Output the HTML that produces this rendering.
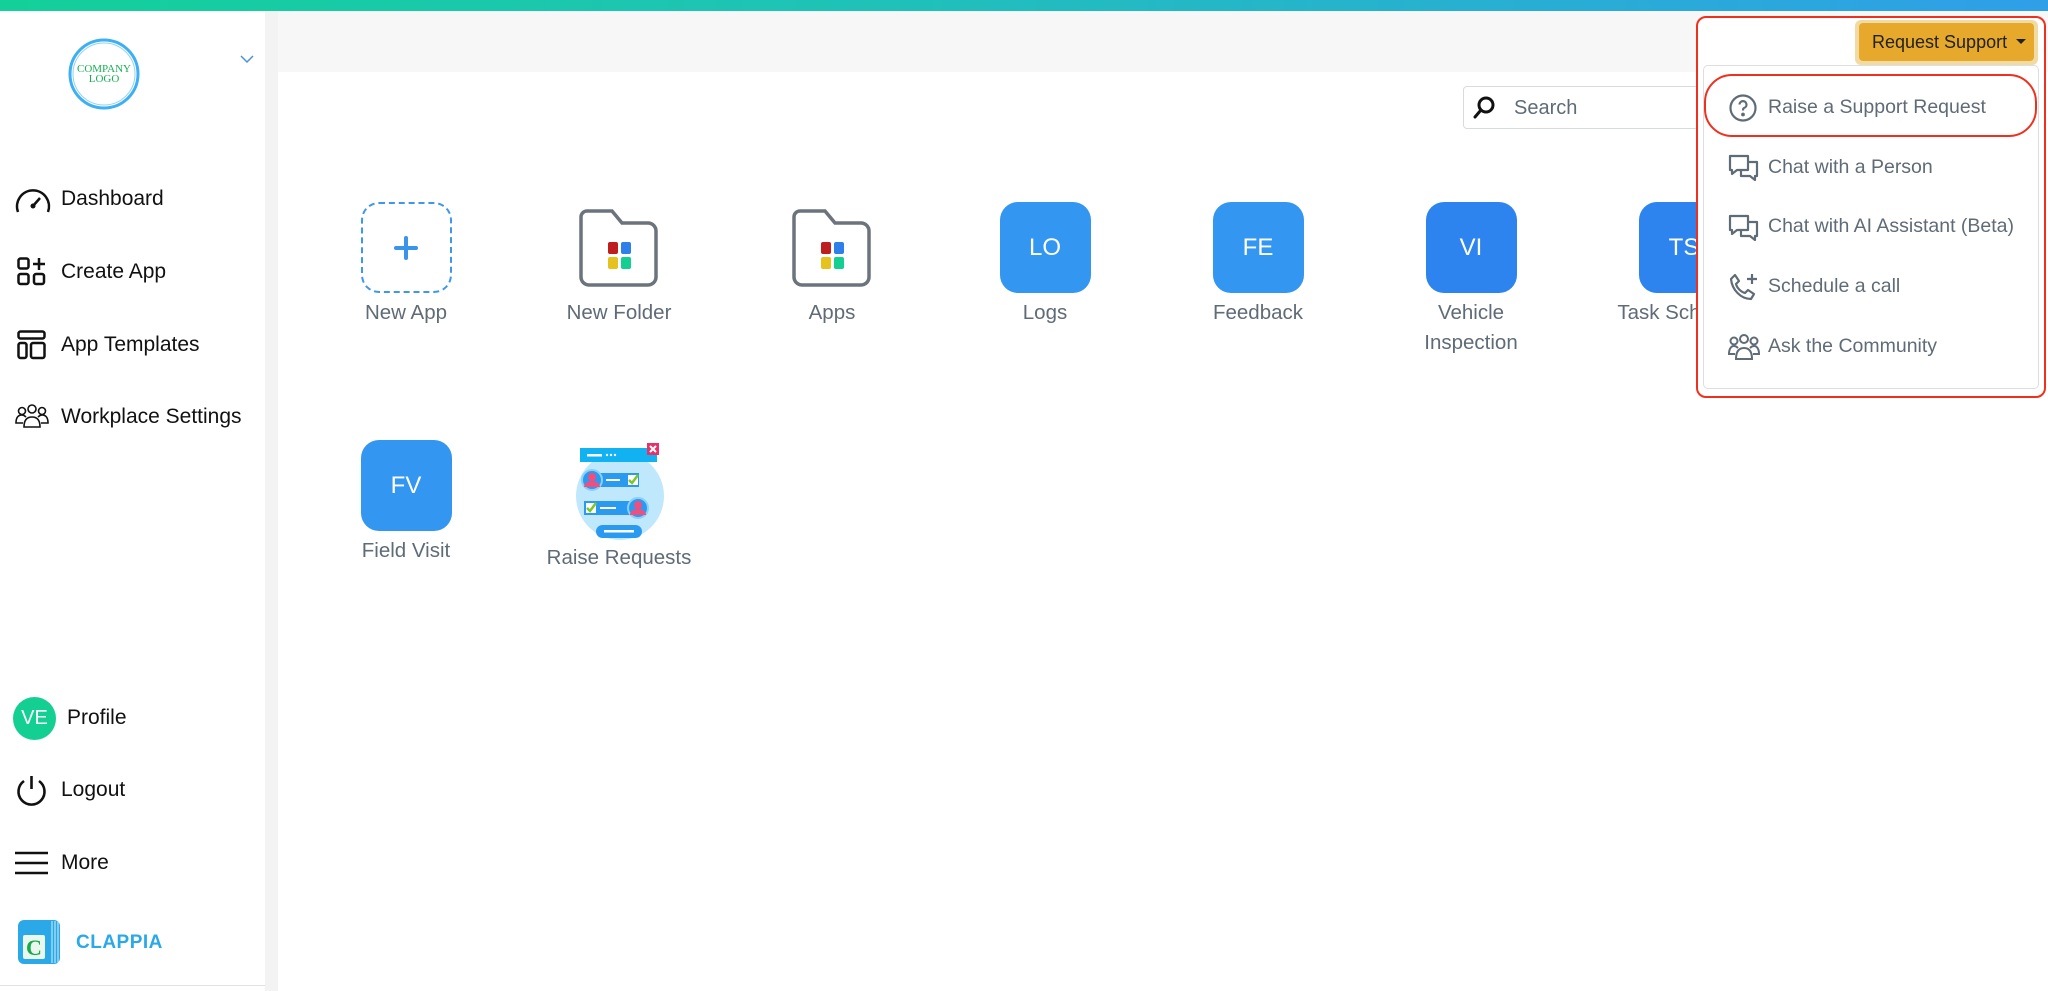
<!DOCTYPE html>
<html><head><meta charset="utf-8"><style>
*{box-sizing:border-box;margin:0;padding:0}
body{width:2048px;height:991px;overflow:hidden;background:#fff;font-family:"Liberation Sans",sans-serif;position:relative}
.abs{position:absolute}
.top{left:0;top:0;width:2048px;height:11px;background:linear-gradient(90deg,#13d09a,#1fc3b6 40%,#2f9fe8)}
.side{left:0;top:11px;width:265px;height:980px;background:#fff}
.strip{left:265px;top:11px;width:13px;height:980px;background:#f3f3f3}
.hdr{left:278px;top:11px;width:1770px;height:61px;background:#f7f7f7}
.nav{position:absolute;left:61px;font-size:21px;color:#111;line-height:24px}
.ico{position:absolute;left:14px}
.app{position:absolute;width:160px;text-align:center;color:#5f6b77;font-size:20.5px;line-height:30px}
.tile{width:91px;height:91px;border-radius:18px;margin:0 auto 5px;color:#fff;font-size:24px;display:flex;align-items:center;justify-content:center}
.mi{position:absolute;left:1768px;font-size:19.5px;color:#5f6b77;line-height:24px}
.mic{position:absolute;left:1728px}
</style></head><body>
<div class="abs top"></div>
<div class="abs side"></div>
<div class="abs strip"></div>
<div class="abs hdr"></div>

<svg class="abs" style="left:66px;top:36px" width="76" height="76" viewBox="0 0 76 76">
<circle cx="38" cy="38" r="34" fill="none" stroke="#3eb0f2" stroke-width="3"/>
<circle cx="38" cy="38" r="31" fill="none" stroke="#8fd2fa" stroke-width="1"/>
<text x="38" y="36" text-anchor="middle" font-family="Liberation Serif" font-size="11" fill="#17b052">COMPANY</text>
<text x="38" y="46" text-anchor="middle" font-family="Liberation Serif" font-size="11" fill="#17b052">LOGO</text>
</svg>
<svg class="abs" style="left:240px;top:55px" width="14" height="9" viewBox="0 0 14 9"><path d="M1 1l6 6 6-6" fill="none" stroke="#4a90e2" stroke-width="1.5"/></svg>

<svg class="ico" style="top:184px" width="38" height="30" viewBox="0 0 38 30"><path d="M4 28A16 16 0 1 1 34 28" fill="none" stroke="#111" stroke-width="2.5"/><path d="M19 22l7-8" stroke="#111" stroke-width="2.5"/><circle cx="19" cy="22" r="2.5" fill="#111"/></svg>
<div class="nav" style="top:187px">Dashboard</div>
<svg class="ico" style="left:17px;top:257px" width="30" height="30" viewBox="0 0 30 30" fill="none" stroke="#111" stroke-width="2.5"><rect x="1.5" y="1.5" width="10" height="10" rx="2"/><rect x="1.5" y="17" width="10" height="10" rx="2"/><rect x="17" y="17" width="10" height="10" rx="2"/><path d="M22 1v12M16 7h12"/></svg>
<div class="nav" style="top:260px">Create App</div>
<svg class="ico" style="left:17px;top:330px" width="30" height="30" viewBox="0 0 30 30" fill="none" stroke="#111" stroke-width="2.5"><rect x="1.5" y="1.5" width="26" height="7" rx="2"/><rect x="1.5" y="13" width="8" height="15" rx="2"/><rect x="14" y="13" width="13.5" height="15" rx="2"/></svg>
<div class="nav" style="top:333px">App Templates</div>
<svg class="ico" style="top:403px" width="36" height="26" viewBox="0 0 36 26" fill="none" stroke="#111" stroke-width="1.6"><circle cx="18" cy="6" r="4"/><circle cx="8" cy="8" r="3.5"/><circle cx="28" cy="8" r="3.5"/><path d="M10 24c0-7 3-10 8-10s8 3 8 10z"/><path d="M9 20H2c0-5 2-8 6-8 2 0 3 1 4 2M27 20h7c0-5-2-8-6-8-2 0-3 1-4 2"/></svg>
<div class="nav" style="top:405px">Workplace Settings</div>

<div class="abs" style="left:13px;top:697px;width:43px;height:43px;border-radius:50%;background:#13cf92;color:#fff;font-size:20px;display:flex;align-items:center;justify-content:center">VE</div>
<div class="nav" style="left:67px;top:706px">Profile</div>
<svg class="ico" style="left:15px;top:774px" width="33" height="33" viewBox="0 0 33 33" fill="none" stroke="#111" stroke-width="2.6"><path d="M16.5 2v13"/><path d="M9 7A13 13 0 1 0 24 7"/></svg>
<div class="nav" style="top:778px">Logout</div>
<svg class="ico" style="left:15px;top:851px" width="33" height="24" viewBox="0 0 33 24" stroke="#111" stroke-width="2.4"><path d="M0 2h33M0 12h33M0 22h33"/></svg>
<div class="nav" style="top:851px">More</div>
<svg class="abs" style="left:18px;top:920px" width="44" height="44" viewBox="0 0 44 44"><rect x="0" y="0" width="42" height="44" rx="6" fill="#2aa8e8"/><path d="M34 1v42M37 1v42M40 1v42" stroke="#d8f0fb" stroke-width="1"/><rect x="5" y="15" width="22" height="24" rx="2" fill="#e9f7ee"/><text x="16" y="35" text-anchor="middle" font-family="Liberation Serif" font-weight="bold" font-size="22" fill="#1aa84c">C</text></svg>
<div class="abs" style="left:76px;top:932px;font-size:19px;font-weight:bold;color:#2aa8e8;letter-spacing:0.5px">CLAPPIA</div>
<div class="abs" style="left:0;top:985px;width:265px;height:1px;background:#e2e2e2"></div>

<div class="abs" style="left:1463px;top:86px;width:250px;height:43px;border:1.5px solid #d7dbe0;border-radius:4px;background:#fff"></div>
<svg class="abs" style="left:1473px;top:96px" width="22" height="24" viewBox="0 0 22 24" fill="none" stroke="#111" stroke-width="3"><circle cx="13" cy="9" r="7"/><path d="M8 14l-6 7" stroke-linecap="round"/></svg>
<div class="abs" style="left:1514px;top:97px;font-size:20px;color:#5f6b77">Search</div>

<div class="app" style="left:326px;top:202px"><div class="tile" style="border:2px dashed #3e97ea;border-radius:18px"><svg width="24" height="24" viewBox="0 0 24 24" stroke="#3a95ea" stroke-width="4" stroke-linecap="round"><path d="M12 2v20M2 12h20"/></svg></div>New App</div>
<div class="app" style="left:539px;top:202px"><div class="tile"><svg width="84" height="82" viewBox="0 0 84 82"><path d="M4 10a6 6 0 0 1 6-6h25l10 12h26a8 8 0 0 1 8 8v46a8 8 0 0 1-8 8H12a8 8 0 0 1-8-8z" fill="#fff" stroke="#6b747c" stroke-width="3.5"/><rect x="31" y="35" width="10" height="12" rx="2" fill="#be1e1e"/><rect x="44" y="35" width="10" height="12" rx="2" fill="#2f7fea"/><rect x="31" y="50" width="10" height="12" rx="2" fill="#e6c21f"/><rect x="44" y="50" width="10" height="12" rx="2" fill="#13cf92"/></svg></div>New Folder</div>
<div class="app" style="left:752px;top:202px"><div class="tile"><svg width="84" height="82" viewBox="0 0 84 82"><path d="M4 10a6 6 0 0 1 6-6h25l10 12h26a8 8 0 0 1 8 8v46a8 8 0 0 1-8 8H12a8 8 0 0 1-8-8z" fill="#fff" stroke="#6b747c" stroke-width="3.5"/><rect x="31" y="35" width="10" height="12" rx="2" fill="#be1e1e"/><rect x="44" y="35" width="10" height="12" rx="2" fill="#2f7fea"/><rect x="31" y="50" width="10" height="12" rx="2" fill="#e6c21f"/><rect x="44" y="50" width="10" height="12" rx="2" fill="#13cf92"/></svg></div>Apps</div>
<div class="app" style="left:965px;top:202px"><div class="tile" style="background:#3396f0">LO</div>Logs</div>
<div class="app" style="left:1178px;top:202px"><div class="tile" style="background:#3396f0">FE</div>Feedback</div>
<div class="app" style="left:1391px;top:202px"><div class="tile" style="background:#2d84ef">VI</div>Vehicle<br>Inspection</div>
<div class="app" style="left:1604px;top:202px;white-space:nowrap"><div class="tile" style="background:#2d84ef">TS</div>Task Schedule</div>

<div class="app" style="left:326px;top:440px"><div class="tile" style="background:#3396f0">FV</div>Field Visit</div>
<svg class="abs" style="left:570px;top:440px" width="100" height="100" viewBox="0 0 100 100">
<circle cx="50" cy="56" r="44" fill="#bfe8fd"/>
<rect x="10" y="8" width="77" height="14" fill="#10b2f2"/>
<rect x="17" y="14" width="15" height="2.5" fill="#fff"/><circle cx="37" cy="15" r="1.2" fill="#fff"/><circle cx="41" cy="15" r="1.2" fill="#fff"/><circle cx="45" cy="15" r="1.2" fill="#fff"/>
<rect x="77" y="3" width="12" height="12" fill="#e8316a"/><path d="M80 6l6 6M86 6l-6 6" stroke="#fff" stroke-width="2"/>
<rect x="20" y="33" width="49" height="14" fill="#2a9af0"/>
<circle cx="22" cy="40" r="10" fill="#2a9af0" stroke="#8ad0fb" stroke-width="2"/><circle cx="22" cy="37" r="4" fill="#ef4e7e"/><path d="M14 47a8 6 0 0 1 16 0z" fill="#ef4e7e"/>
<rect x="36" y="39" width="14" height="2" fill="#fff"/><rect x="58" y="35" width="10" height="10" fill="#fff"/><path d="M59 40l3 3 6-8" stroke="#7bc62a" stroke-width="2.5" fill="none"/>
<rect x="14" y="61" width="50" height="14" fill="#2a9af0"/>
<rect x="16" y="63" width="10" height="10" fill="#fff"/><path d="M17 68l3 3 6-8" stroke="#7bc62a" stroke-width="2.5" fill="none"/><rect x="30" y="67" width="16" height="2" fill="#fff"/>
<circle cx="68" cy="68" r="10" fill="#2a9af0" stroke="#8ad0fb" stroke-width="2"/><circle cx="68" cy="65" r="4" fill="#ef4e7e"/><path d="M60 75a8 6 0 0 1 16 0z" fill="#ef4e7e"/>
<rect x="26" y="85" width="46" height="13" rx="6.5" fill="#2a9af0"/><rect x="34" y="90" width="30" height="2.5" fill="#fff"/>
</svg>
<div class="app" style="left:539px;top:543px">Raise Requests</div>

<div class="abs" style="left:1696px;top:16px;width:350px;height:382px;border:2px solid #f0301e;border-radius:10px;background:#fff"></div>
<div class="abs" style="left:1703px;top:65px;width:336px;height:324px;border:1.5px solid #dcdfe2;border-radius:5px;background:#fff"></div>
<div class="abs" style="left:1855px;top:20px;width:183px;height:45px;border-radius:6px;background:#f1dba3"></div>
<div class="abs" style="left:1859px;top:23px;width:175px;height:38px;border-radius:4px;background:#e6a92c;color:#222;font-size:18px;line-height:38px;padding-left:13px">Request Support<span style="position:absolute;left:157px;top:16px;border-left:5px solid transparent;border-right:5px solid transparent;border-top:5px solid #222"></span></div>
<div class="abs" style="left:1704px;top:74px;width:333px;height:63px;border:2.5px solid #f0301e;border-radius:28px"></div>

<svg class="mic" style="top:93px" width="30" height="30" viewBox="0 0 30 30" fill="none" stroke="#5f6b77" stroke-width="2.2"><circle cx="15" cy="15" r="12.5"/><path d="M11.5 11.5a3.5 3.5 0 1 1 4.5 3.5c-1 .4-1 1.2-1 2.5"/><circle cx="15" cy="21.5" r=".8" fill="#5f6b77"/></svg>
<div class="mi" style="top:95px">Raise a Support Request</div>
<svg class="mic" style="top:153px" width="32" height="30" viewBox="0 0 32 30" fill="none" stroke="#5f6b77" stroke-width="2.2" stroke-linejoin="round"><path d="M2 3h18v14H9l-5 4v-4H2z"/><path d="M20 9h9v14h-2v4l-5-4h-9v-6"/></svg>
<div class="mi" style="top:155px">Chat with a Person</div>
<svg class="mic" style="top:213px" width="32" height="30" viewBox="0 0 32 30" fill="none" stroke="#5f6b77" stroke-width="2.2" stroke-linejoin="round"><path d="M2 3h18v14H9l-5 4v-4H2z"/><path d="M20 9h9v14h-2v4l-5-4h-9v-6"/></svg>
<div class="mi" style="top:214px">Chat with AI Assistant (Beta)</div>
<svg class="mic" style="top:272px" width="32" height="32" viewBox="0 0 32 32" fill="none" stroke="#5f6b77" stroke-width="2.2" stroke-linejoin="round"><path d="M7 3l4 6-3 3c1 4 5 8 9 9l3-3 6 4-3 5C13 27 4 18 3 7z"/><path d="M24 2v10M19 7h10"/></svg>
<div class="mi" style="top:274px">Schedule a call</div>
<svg class="mic" style="top:333px" width="32" height="28" viewBox="0 0 32 28" fill="none" stroke="#5f6b77" stroke-width="2"><circle cx="16" cy="6" r="4"/><circle cx="6" cy="8" r="3.5"/><circle cx="26" cy="8" r="3.5"/><path d="M8 26c0-8 3-11 8-11s8 3 8 11z"/><path d="M7 21H1c0-5 2-8 5-8 2 0 3 1 4 2M25 21h6c0-5-2-8-5-8-2 0-3 1-4 2"/></svg>
<div class="mi" style="top:334px">Ask the Community</div>
</body></html>
